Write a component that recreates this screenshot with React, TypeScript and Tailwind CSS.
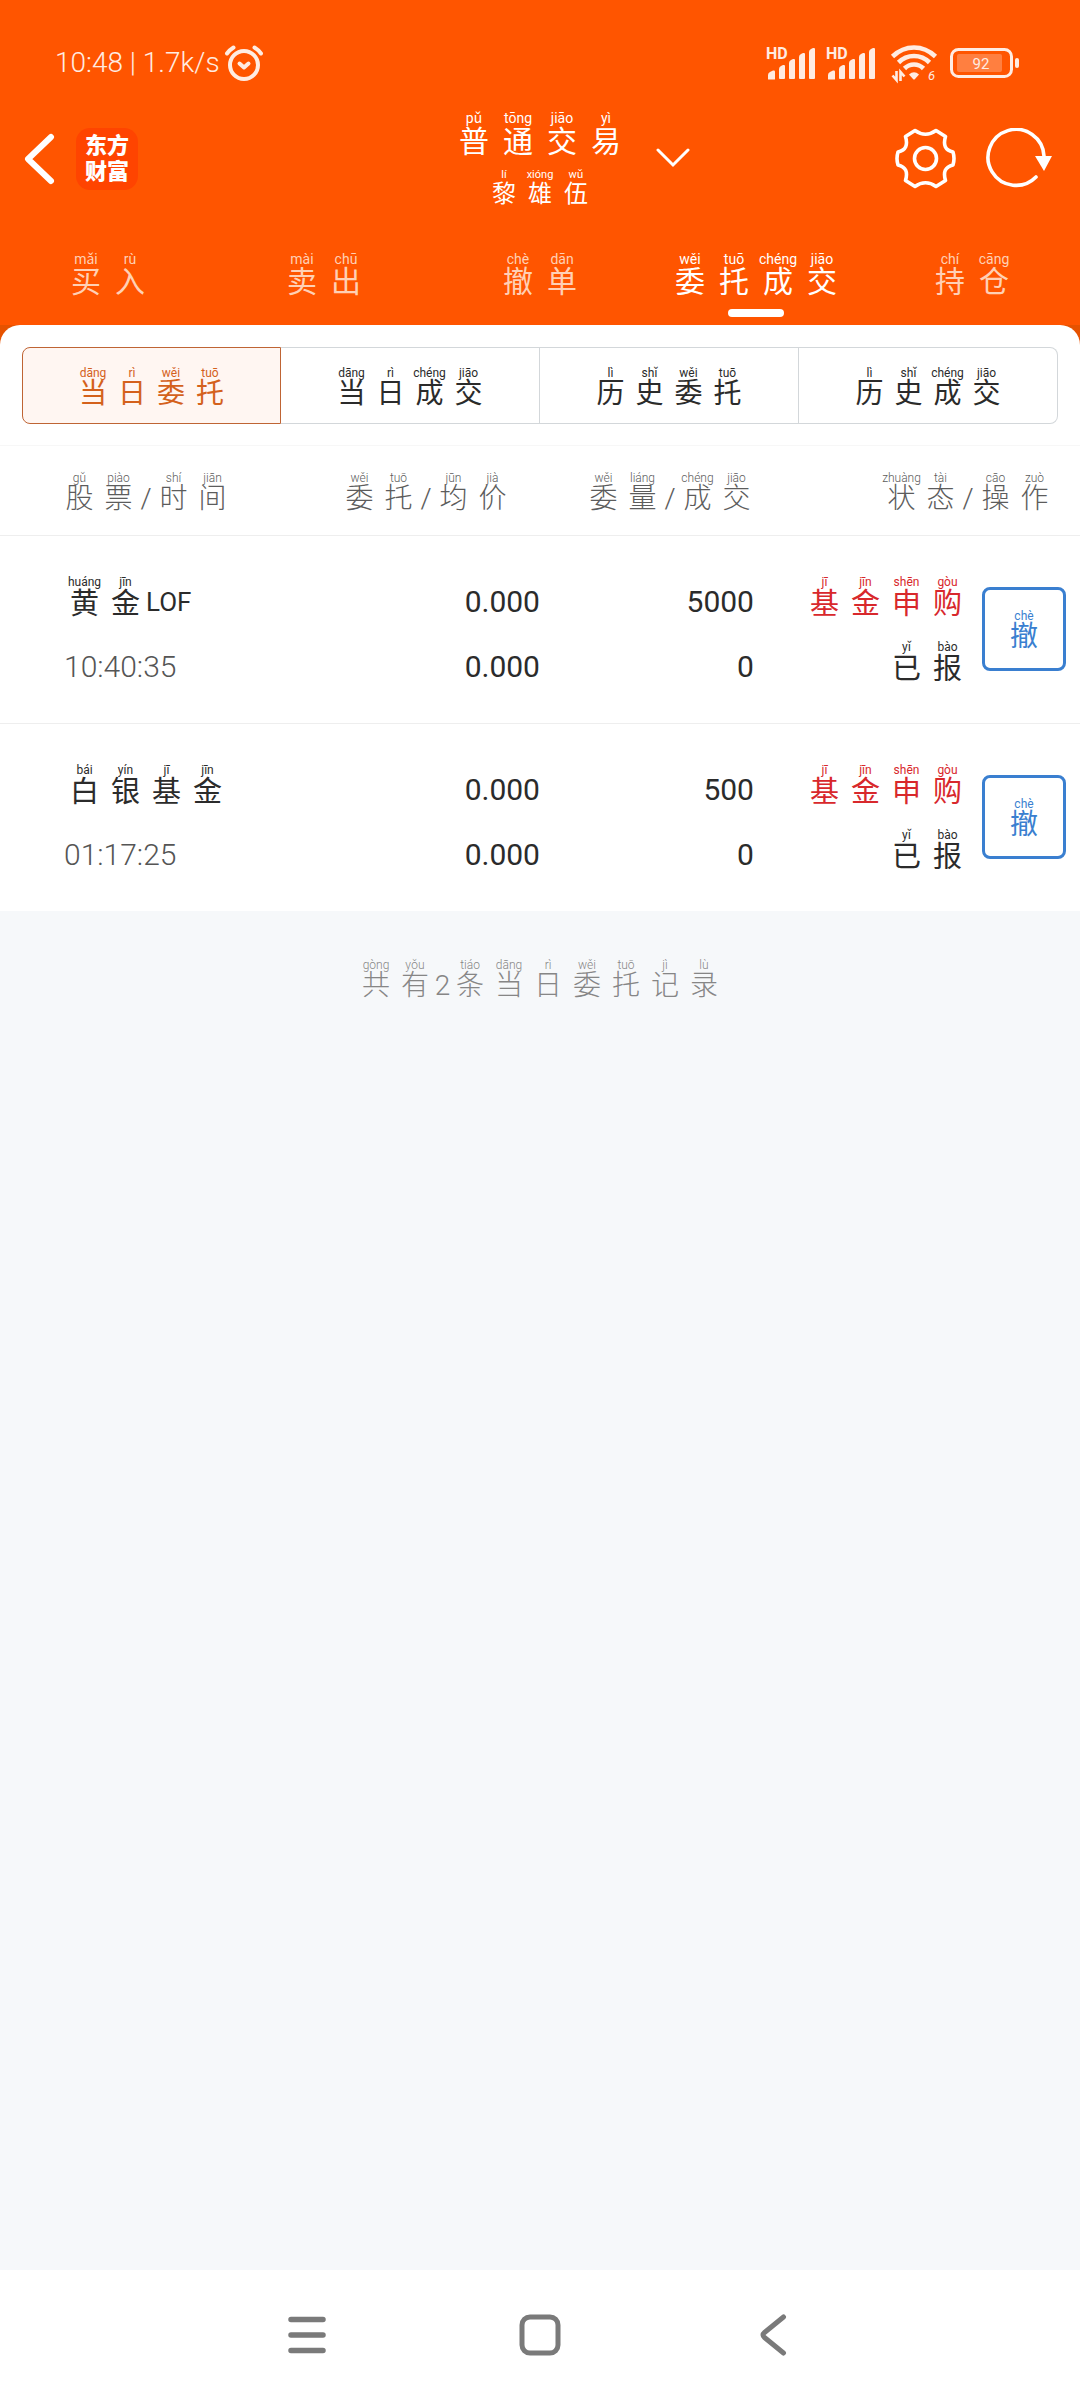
import React, { useState } from 'react';
import clsx from 'clsx';

type Size = 'title' | 'name' | 'tab' | 'row' | 'label';

const sizes: Record<Size, { cell: string; pinyin: string; plain: string }> = {
    title: { cell: 'w-11 text-[30px] leading-8', pinyin: 'text-[14px] leading-4', plain: 'text-[30px] leading-8' },
    name: { cell: 'w-9 text-[24px] leading-[26px]', pinyin: 'text-[11px] leading-3', plain: 'text-[24px] leading-[26px]' },
    tab: { cell: 'w-11 text-[30px] leading-8', pinyin: 'text-[14px] leading-[14px]', plain: 'text-[30px] leading-8' },
    row: { cell: 'w-[41px] text-[29px] leading-8', pinyin: 'text-[12px] leading-3', plain: 'text-[26px] leading-9' },
    label: { cell: 'w-[39px] text-[28px] leading-[30px]', pinyin: 'text-[12px] leading-3', plain: 'text-[28px] leading-[30px]' },
};

// "买:mǎi 入:rù" -> characters with their pinyin above, other tokens are left plain
const Pinyin: React.FC<{ text: string; size: Size; className?: string }> = ({ text, size, className }) => (
    <span className={clsx('inline-flex items-end whitespace-nowrap', className)}>
        {text.split(' ').map((token, i) => {
            const [char, pinyin] = token.split(':');
            if (!pinyin) {
                return <span key={i} className={clsx('min-w-4 text-center', sizes[size].plain)}>{char}</span>;
            }
            return (
                <ruby key={i} className={clsx('inline-flex flex-col-reverse items-center', sizes[size].cell)}>
                    {char}
                    <rt className={clsx('block', sizes[size].pinyin)}>{pinyin}</rt>
                </ruby>
            );
        })}
    </span>
);

const tabs = ['买:mǎi 入:rù', '卖:mài 出:chū', '撤:chè 单:dān', '委:wěi 托:tuō 成:chéng 交:jiāo', '持:chí 仓:cāng'];

const subTabs = [
    '当:dāng 日:rì 委:wěi 托:tuō',
    '当:dāng 日:rì 成:chéng 交:jiāo',
    '历:lì 史:shǐ 委:wěi 托:tuō',
    '历:lì 史:shǐ 成:chéng 交:jiāo',
];

const orders = [
    { name: '黄:huáng 金:jīn LOF', time: '10:40:35', price: '0.000', avg: '0.000', amount: '5000', filled: '0' },
    { name: '白:bái 银:yín 基:jī 金:jīn', time: '01:17:25', price: '0.000', avg: '0.000', amount: '500', filled: '0' },
];

const AlarmIcon = () => (
    <svg width="40" height="38" viewBox="0 0 40 38" fill="none" stroke="currentColor" strokeLinecap="round" strokeLinejoin="round">
        <circle cx="20" cy="21" r="14" strokeWidth="4" />
        <path d="M15.500 19.500l4.500 4 4.500-4" strokeWidth="4" />
        <path d="M3 9.500Q5.500 6 9.500 3.500M37 9.500Q34.500 6 30.500 3.500" strokeWidth="4" />
    </svg>
);

const SignalIcon = () => (
    <svg className="overflow-visible" width="52" height="34" viewBox="0 0 52 34" fill="currentColor">
        <text x="0" y="13" fontSize="16" fontWeight="700">HD</text>
        <path d="M2 33v-4q0-2 2-3l3-1.500q2-.5 2 1V33q0 .5-.5.500h-6q-.5 0-.5-.5z" />
        <path d="M13 32V23q0-2 2-3l2-1q2-.5 2 1V32q0 1-1 1h-4q-1 0-1-1z" />
        <path d="M23 32V17q0-2 2-3l2-1q2-.5 2 1V32q0 1-1 1h-4q-1 0-1-1z" />
        <path d="M33 32V11q0-2 2-3l2-1q2-.5 2 1V32q0 1-1 1h-4q-1 0-1-1z" />
        <path d="M43 32V6q0-2 2-3l2-1q2-.5 2 1V32q0 1-1 1h-4q-1 0-1-1z" />
    </svg>
);

const WifiIcon = () => (
    <svg className="overflow-visible" width="48" height="38" viewBox="0 0 48 38" fill="none" stroke="currentColor" strokeWidth="4.600">
        <path d="M2.500 12.500Q12 3.500 24 3.500T45.500 12.500" />
        <path d="M8.500 18.500Q15 12 24 12T39.500 18.500" />
        <path d="M14.500 24.500Q18.500 20.500 24 20.500T33.500 24.500" />
        <path d="M19 30.500q5-4.500 10 0l-4 4.500q-1 1-2 0z" fill="currentColor" stroke="none" />
        <path d="M6.500 27v9l-4-4.500M10.500 37v-9l4 4.500" strokeWidth="2.600" />
        <text x="38" y="36" fontSize="13" fontStyle="italic" fill="currentColor" stroke="none">6</text>
    </svg>
);

const BatteryIcon = () => (
    <svg width="70" height="32" viewBox="0 0 70 32" fill="none">
        <rect x="1.500" y="2.500" width="60" height="27" rx="7" stroke="currentColor" strokeWidth="3" />
        <rect x="7" y="7" width="45" height="18" rx="2" fill="white" fillOpacity=".25" />
        <rect x="65" y="11" width="4" height="10" rx="2" fill="currentColor" />
        <text x="31" y="22" fontSize="15" textAnchor="middle" fill="currentColor">92</text>
    </svg>
);

const GearIcon = () => (
    <svg width="61" height="61" viewBox="0 0 61 61" fill="none" stroke="currentColor" strokeWidth="3.600" strokeLinejoin="round">
        <path d="M20 2.500Q30.500 10 41 2.500L50.500 8.500C48 17 50 22 58 24Q60 30.500 58 37C50 39 48 44 50.500 52.500L41 58.500Q30.500 51 20 58.500L10.500 52.500C13 44 11 39 3 37Q1 30.500 3 24C11 22 13 17 10.500 8.500Z" />
        <circle cx="30.500" cy="30.500" r="11" />
    </svg>
);

const RefreshIcon = () => (
    <svg width="66" height="62" viewBox="0 0 66 62" fill="none" stroke="currentColor" strokeWidth="3.600">
        <path d="M58 28A28 28 0 1 0 50 49" strokeLinecap="round" />
        <path d="M49 28h17l-8 15z" fill="currentColor" stroke="none" />
    </svg>
);

export default function App() {
    const [tab, setTab] = useState(3);
    const [subTab, setSubTab] = useState(0);

    return (
        <div className="flex min-h-screen flex-col bg-[#f6f8fa] font-[Roboto,'Noto_Sans_CJK_SC',sans-serif] text-[#2b2b2b]">
            <header className="bg-[#ff5500] text-white">
                {/* Status bar */}
                <div className="flex h-[110px] items-center justify-between pt-4 pr-[60px] pl-[55px] text-[#ffece2]">
                    <div className="flex items-center gap-1">
                        <span className="text-[28px] font-light">10:48 | 1.7k/s</span>
                        <AlarmIcon />
                    </div>
                    <div className="flex items-center gap-3">
                        <div className="flex gap-2">
                            <SignalIcon />
                            <SignalIcon />
                        </div>
                        <WifiIcon />
                        <BatteryIcon />
                    </div>
                </div>

                {/* Title bar */}
                <div className="grid h-24 grid-cols-[1fr_auto_1fr] items-center px-6">
                    <div className="flex items-center gap-5">
                        <button aria-label="返回">
                            <svg width="32" height="52" viewBox="0 0 32 52" fill="none" stroke="currentColor" strokeWidth="6" strokeLinecap="round" strokeLinejoin="round">
                                <path d="M27 4L4 26l23 22" />
                            </svg>
                        </button>
                        <div className="flex h-[62px] w-[62px] flex-col items-center justify-center rounded-[14px] bg-[#ff4400] text-[22px] leading-[26px] font-black">
                            <span>东方</span>
                            <span>财富</span>
                        </div>
                    </div>
                    <button className="relative flex flex-col items-center gap-[11px]">
                        <Pinyin size="title" text="普:pǔ 通:tōng 交:jiāo 易:yì" />
                        <Pinyin size="name" text="黎:lí 雄:xióng 伍:wǔ" />
                        <svg className="absolute top-[38px] left-full ml-7" width="34" height="20" viewBox="0 0 34 20" fill="none" stroke="currentColor" strokeWidth="3" strokeLinecap="round">
                            <path d="M2 2l15 15L32 2" />
                        </svg>
                    </button>
                    <div className="flex items-center justify-end gap-[30px] pr-1">
                        <button aria-label="设置"><GearIcon /></button>
                        <button aria-label="刷新"><RefreshIcon /></button>
                    </div>
                </div>

                {/* Main tabs */}
                <nav className="grid grid-cols-5 pt-[46px] pb-2">
                    {tabs.map((text, i) => (
                        <button key={text} onClick={() => setTab(i)} className={clsx('flex flex-col items-center gap-[11px]', tab === i ? 'text-white' : 'text-[#ffd0b5]')}>
                            <Pinyin size="tab" text={text} />
                            <span className={clsx('h-2 w-14 rounded-full', tab === i && 'bg-white')} />
                        </button>
                    ))}
                </nav>
            </header>

            <main className="flex-1">
                <div className="bg-[#e65200]">
                    <div className="rounded-t-[20px] border-b border-[#f7f7f7] bg-white px-[22px] pt-[22px] pb-[21px]">
                        <div className="grid grid-cols-4">
                            {subTabs.map((text, i) => (
                                <button
                                    key={text}
                                    onClick={() => setSubTab(i)}
                                    className={clsx(
                                        'flex h-[77px] items-center justify-center border pt-1 first:rounded-l-lg last:rounded-r-lg',
                                        subTab === i ? 'border-[#bf6434] bg-[#fff6f2] text-[#d4611c]' : 'border-[#d3d7da] border-l-0',
                                    )}
                                >
                                    <Pinyin size="label" text={text} />
                                </button>
                            ))}
                        </div>
                    </div>
                </div>

                <table className="w-full table-fixed bg-white">
                    <colgroup>
                        <col className="w-[28%]" />
                        <col className="w-[22%]" />
                        <col className="w-[20%]" />
                        <col className="w-[20%]" />
                        <col className="w-[10%]" />
                    </colgroup>
                    <thead>
                        <tr className="h-[89px] border-b border-[#eeeeee] text-right text-[#5c5c5c] [&_th]:pt-1.5 [&_th]:font-light">
                            <th className="pl-[60px] text-left"><Pinyin size="label" text="股:gǔ 票:piào / 时:shí 间:jiān" className="align-middle" /></th>
                            <th className="pr-7"><Pinyin size="label" text="委:wěi 托:tuō / 均:jūn 价:jià" className="align-middle" /></th>
                            <th><Pinyin size="label" text="委:wěi 量:liáng / 成:chéng 交:jiāo" className="align-middle" /></th>
                            <th colSpan={2} className="pr-[26px]"><Pinyin size="label" text="状:zhuàng 态:tài / 操:cāo 作:zuò" className="align-middle" /></th>
                        </tr>
                    </thead>
                    <tbody>
                        {orders.map(order => (
                            <tr key={order.time} className="h-[188px] border-b border-[#eeeeee] text-right text-[30px] leading-9 last:border-b-0">
                                <td className="pl-16">
                                    <div className="flex h-[46px] items-end"><Pinyin size="row" text={order.name} /></div>
                                    <div className="mt-[19px] flex h-[46px] items-end font-light text-[#555555]">{order.time}</div>
                                </td>
                                <td>
                                    <div className="flex h-[46px] items-end justify-end">{order.price}</div>
                                    <div className="mt-[19px] flex h-[46px] items-end justify-end">{order.avg}</div>
                                </td>
                                <td className="pr-0.5">
                                    <div className="flex h-[46px] items-end justify-end">{order.amount}</div>
                                    <div className="mt-[19px] flex h-[46px] items-end justify-end">{order.filled}</div>
                                </td>
                                <td className="pr-1">
                                    <div className="flex h-[46px] items-end justify-end text-[#d8282c]"><Pinyin size="row" text="基:jī 金:jīn 申:shēn 购:gòu" /></div>
                                    <div className="mt-[19px] flex h-[46px] items-end justify-end"><Pinyin size="row" text="已:yǐ 报:bào" /></div>
                                </td>
                                <td className="pr-3.5">
                                    <button className="ml-auto flex h-[84px] w-[84px] items-center justify-center rounded-lg border-3 border-[#3a7fd0] pt-1 text-[#3a7fd0]">
                                        <Pinyin size="label" text="撤:chè" />
                                    </button>
                                </td>
                            </tr>
                        ))}
                    </tbody>
                </table>

                <p className="flex justify-center pt-12 font-light text-[#868686]">
                    <Pinyin size="label" text="共:gòng 有:yǒu 2 条:tiáo 当:dāng 日:rì 委:wěi 托:tuō 记:jì 录:lù" />
                </p>
            </main>

            {/* System navigation */}
            <footer className="flex h-[130px] items-center justify-center bg-white text-[#7a7a7a]">
                <button aria-label="菜单" className="flex w-[233px] justify-center">
                    <svg width="40" height="42" viewBox="0 0 40 42" stroke="currentColor" strokeWidth="5.500" strokeLinecap="round">
                        <path d="M4 5.500h32M4 21h32M4 36.500h32" />
                    </svg>
                </button>
                <button aria-label="主页" className="flex w-[233px] justify-center">
                    <svg width="42" height="42" viewBox="0 0 42 42" fill="none" stroke="currentColor" strokeWidth="5">
                        <rect x="3" y="3" width="36" height="36" rx="8" />
                    </svg>
                </button>
                <button aria-label="后退" className="flex w-[233px] justify-center">
                    <svg width="28" height="42" viewBox="0 0 28 42" fill="none" stroke="currentColor" strokeWidth="5" strokeLinecap="round">
                        <path d="M24.500 3L5.500 18.500Q2.500 21 5.500 23.500L24.500 39" />
                    </svg>
                </button>
            </footer>
        </div>
    );
}
